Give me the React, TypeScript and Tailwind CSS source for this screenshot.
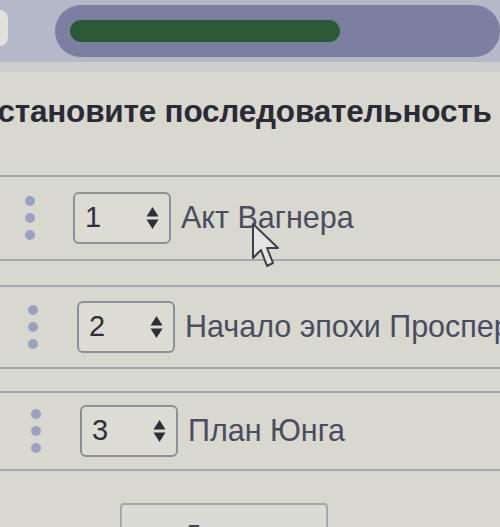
import React from "react";

const font = { fontFamily: '"Liberation Sans", Arial, sans-serif' };

function Dots({ className }: { className: string }) {
  return (
    <div className={`flex flex-col gap-[7px] ${className}`}>
      <span className="block w-[10px] h-[10px] rounded-full bg-[#9ca1c4]" />
      <span className="block w-[10px] h-[10px] rounded-full bg-[#9ca1c4]" />
      <span className="block w-[10px] h-[10px] rounded-full bg-[#9ca1c4]" />
    </div>
  );
}

function Arrows() {
  return (
    <svg width="13" height="24" viewBox="0 0 13 24">
      <path d="M6.5 1 L12.5 10.5 L0.5 10.5 Z" fill="#2f2f36" />
      <path d="M6.5 23 L12.5 13.5 L0.5 13.5 Z" fill="#2f2f36" />
    </svg>
  );
}

function Row({
  n,
  label,
  h,
  dotsPad,
  boxPad,
  mt,
}: {
  n: number;
  label: string;
  h: string;
  dotsPad: string;
  boxPad: string;
  mt: string;
}) {
  return (
    <div className={`${h} ${mt} border-t-2 border-b-2 border-[#a3a6b3] flex items-center`}>
      <Dots className={dotsPad} />
      <div className={`${boxPad} flex items-center gap-[10px]`}>
        <div className="w-[98px] h-[52px] border-2 border-[#8d8f99] rounded-[6px] bg-[#dcdcd4] flex items-center justify-between pl-[10px] pr-[10px]">
          <span className="text-[29px] text-[#2f3038] leading-none">{n}</span>
          <Arrows />
        </div>
        <span className="text-[30.5px] text-[#4a4d62] whitespace-nowrap leading-none">{label}</span>
      </div>
    </div>
  );
}

export default function App() {
  return (
    <div className="relative w-[500px] h-[527px] overflow-hidden bg-[#d8d8ce]" style={font}>
      {/* header */}
      <div className="h-[62px] bg-[#b4b8c9] flex items-center relative">
        <div className="absolute left-0 top-[10px] w-[8px] h-[36px] rounded-r-full bg-[#dfe1da]" />
        <div className="ml-[55px] w-[470px] h-[52px] rounded-full bg-[#7b80a0] flex items-center pl-[15px]">
          <div className="w-[270px] h-[22px] rounded-full bg-[#2c5a37]" />
        </div>
      </div>
      <div className="h-[10px] bg-[#cdcfcc]" />
      {/* title */}
      <div className="pt-[24px] pl-0 -ml-[20px]">
        <h1 className="text-[31.5px] font-bold text-[#2a2b36] whitespace-nowrap leading-none tracking-[-0.2px]">
          Установите последовательность
        </h1>
      </div>
      {/* list */}
      <div className="mt-[47px]">
        <Row n={1} label="Акт Вагнера" h="h-[86px]" dotsPad="ml-[25px]" boxPad="ml-[38px]" mt="mt-0" />
        <Row n={2} label="Начало эпохи Проспериона" h="h-[84px]" dotsPad="ml-[28px]" boxPad="ml-[39px]" mt="mt-[24px]" />
        <Row n={3} label="План Юнга" h="h-[80px]" dotsPad="ml-[31px]" boxPad="ml-[39px]" mt="mt-[22px]" />
      </div>
      <div className="mt-[32px] ml-[120px] w-[208px] h-[44px] border-2 border-[#a7a8ad] rounded-[4px] bg-[#dadbd4] flex justify-center pt-[16px]">
        <span className="text-[28px] text-[#444] leading-none">Далее</span>
      </div>
      {/* cursor */}
      <svg className="absolute left-[250px] top-[222px]" width="32" height="50" viewBox="0 0 32 50">
        <path
          d="M3 2 L3 36 L11 28 L17 44 L23 41 L17 26 L28 26 Z"
          fill="#e4e5e0"
          stroke="#3c3f4e"
          strokeWidth="2"
          strokeLinejoin="round"
        />
      </svg>
    </div>
  );
}
